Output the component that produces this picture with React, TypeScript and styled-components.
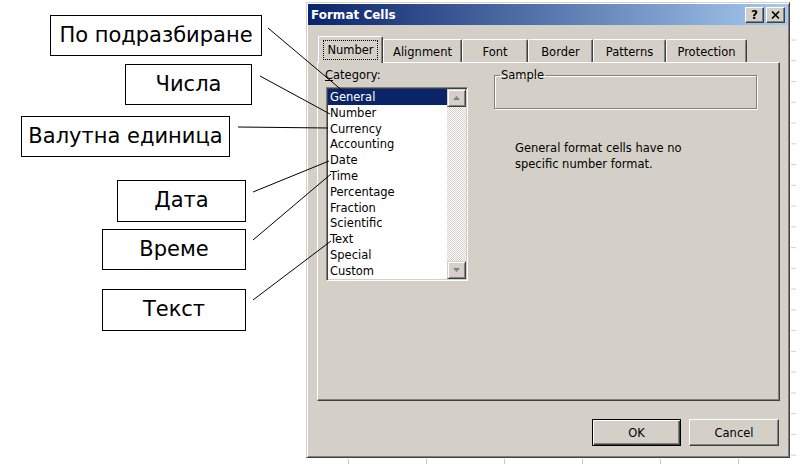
import React from 'react';
import styled, { createGlobalStyle } from 'styled-components';

const GlobalStyle = createGlobalStyle`
  html, body { margin: 0; padding: 0; background: #fff; }
  body { width: 809px; height: 469px; overflow: hidden; }
`;

const Page = styled.div`
  position: relative;
  width: 809px;
  height: 469px;
  display: flex;
  align-items: flex-start;
`;

const Notes = styled.div`
  width: 306px;
  flex: 0 0 306px;
  display: flex;
  flex-direction: column;
  align-items: flex-start;
`;

const Note = styled.div<{ $left: number; $gap: number; $width: number; $height?: number }>`
  margin-left: ${(p) => p.$left}px;
  margin-top: ${(p) => p.$gap}px;
  width: ${(p) => p.$width}px;
  height: ${(p) => p.$height ?? 41}px;
  box-sizing: border-box;
  border: 1px solid #000;
  background: #fff;
  display: flex;
  align-items: center;
  justify-content: center;
  padding-bottom: 2px;
  font-family: 'DejaVu Sans', sans-serif;
  font-size: 21px;
  color: #000;
  white-space: nowrap;
`;

const Dialog = styled.div`
  margin-top: 2px;
  width: 484px;
  height: 456px;
  box-sizing: border-box;
  background: #d4d0c8;
  border: 1px solid;
  border-color: #d4d0c8 #404040 #404040 #d4d0c8;
  box-shadow: inset 1px 1px #fff, inset -1px -1px #808080;
  padding: 1px;
  display: flex;
  flex-direction: column;
  font-family: 'DejaVu Sans', 'Liberation Sans', sans-serif;
  font-size: 11.5px;
  color: #000;
`;

const TitleBar = styled.div`
  height: 21px;
  flex: 0 0 21px;
  display: flex;
  align-items: center;
  padding: 0 3px 0 3px;
  background: linear-gradient(to right, #0a246a, #a6caf0);
`;

const Title = styled.div`
  flex: 1;
  color: #fff;
  font-weight: bold;
  font-size: 12px;
`;

const CaptionButton = styled.div<{ $gap?: number }>`
  width: 19px;
  height: 16px;
  margin-left: ${(p) => p.$gap ?? 0}px;
  box-sizing: border-box;
  background: #d4d0c8;
  border: 1px solid;
  border-color: #fff #404040 #404040 #fff;
  box-shadow: inset -1px -1px #808080;
  display: flex;
  align-items: center;
  justify-content: center;
  font-weight: bold;
  font-size: 12px;
  line-height: 1;
`;

const Body = styled.div`
  flex: 1;
  display: flex;
  flex-direction: column;
  padding: 11px 8px 0 9px;
`;

const TabStrip = styled.div`
  height: 26px;
  display: flex;
  align-items: flex-end;
  padding-left: 1px;
  position: relative;
  z-index: 1;
`;

const Tab = styled.div<{ $width: number; $active?: boolean }>`
  width: ${(p) => p.$width}px;
  height: ${(p) => (p.$active ? 27 : 23)}px;
  margin-bottom: ${(p) => (p.$active ? -1 : 0)}px;
  box-sizing: border-box;
  background: #d4d0c8;
  border-top: 1px solid #fff;
  border-left: 1px solid #fff;
  border-right: 1px solid #404040;
  border-radius: 2px 2px 0 0;
  box-shadow: inset -1px 0 #808080;
  display: flex;
  align-items: center;
  justify-content: center;
  padding-top: 1px;
  padding-bottom: ${(p) => (p.$active ? 2 : 0)}px;
`;

const Focus = styled.span`
  outline: 1px dotted #000;
  outline-offset: 2px;
  padding: 0 1px;
`;

const Panel = styled.div`
  width: 463px;
  height: 339px;
  box-sizing: border-box;
  border: 1px solid;
  border-color: #fff #404040 #404040 #fff;
  box-shadow: inset -1px -1px #808080;
  display: flex;
  align-items: flex-start;
  padding: 5px 0 0 7px;
`;

const LeftCol = styled.div`
  width: 143px;
  display: flex;
  flex-direction: column;
`;

const Label = styled.div`
  line-height: 14px;
  u { text-decoration: underline; }
`;

const ListBox = styled.div`
  margin: 5px 0 0 1px;
  width: 142px;
  height: 194px;
  box-sizing: border-box;
  background: #fff;
  border: 1px solid;
  border-color: #808080 #fff #fff #808080;
  box-shadow: inset 1px 1px #404040, inset -1px -1px #d4d0c8;
  padding: 1px;
  display: flex;
`;

const Items = styled.div`
  flex: 1;
  display: flex;
  flex-direction: column;
`;

const Item = styled.div<{ $selected?: boolean }>`
  height: 15.8px;
  line-height: 16.5px;
  padding-left: 2px;
  background: ${(p) => (p.$selected ? '#0a246a' : 'transparent')};
  color: ${(p) => (p.$selected ? '#fff' : '#000')};
`;

const ScrollBar = styled.div`
  width: 19px;
  display: flex;
  flex-direction: column;
`;

const ScrollButton = styled.div`
  height: 18px;
  flex: 0 0 18px;
  box-sizing: border-box;
  background: #d4d0c8;
  border: 1px solid;
  border-color: #d4d0c8 #404040 #404040 #d4d0c8;
  box-shadow: inset 1px 1px #fff, inset -1px -1px #808080;
  display: flex;
  align-items: center;
  justify-content: center;
`;

const Track = styled.div`
  flex: 1;
  background: repeating-conic-gradient(#fff 0 25%, #d4d0c8 0 50%) 0 0 / 2px 2px;
`;

const RightCol = styled.div`
  margin-left: 26px;
  display: flex;
  flex-direction: column;
`;

const Group = styled.fieldset`
  margin: 0;
  padding: 0;
  width: 263px;
  height: 41px;
  box-sizing: border-box;
  border: 1px solid #808080;
  box-shadow: inset 1px 1px #fff, 1px 1px #fff;
  min-inline-size: 0;
`;

const Legend = styled.legend`
  padding: 0 1px;
  margin-left: 5px;
  line-height: 14px;
`;

const Description = styled.div`
  margin: 31px 0 0 21px;
  line-height: 16px;
`;

const ButtonRow = styled.div`
  display: flex;
  justify-content: flex-end;
  gap: 8px;
  margin: 18px 1px 0 0;
`;

const Button = styled.div<{ $width: number; $default?: boolean }>`
  width: ${(p) => p.$width}px;
  height: 27px;
  box-sizing: border-box;
  background: #d4d0c8;
  border: 1px solid;
  border-color: ${(p) => (p.$default ? '#000' : '#fff #404040 #404040 #fff')};
  box-shadow: ${(p) =>
    p.$default
      ? 'inset 1px 1px #fff, inset -1px -1px #404040, inset -2px -2px #808080'
      : 'inset -1px -1px #808080'};
  display: flex;
  align-items: center;
  justify-content: center;
`;

const Overlay = styled.svg`
  position: absolute;
  left: 0;
  top: 0;
  pointer-events: none;
`;

const notes = [
  { text: 'По подразбиране', left: 50, gap: 15, width: 212 },
  { text: 'Числа', left: 125, gap: 8, width: 127 },
  { text: 'Валутна единица', left: 21, gap: 11, width: 209 },
  { text: 'Дата', left: 117, gap: 23, width: 129, height: 42 },
  { text: 'Време', left: 102, gap: 7, width: 144 },
  { text: 'Текст', left: 102, gap: 19, width: 144, height: 42 },
];

const tabs = [
  { name: 'Number', width: 65 },
  { name: 'Alignment', width: 79 },
  { name: 'Font', width: 66 },
  { name: 'Border', width: 65 },
  { name: 'Patterns', width: 73 },
  { name: 'Protection', width: 81 },
];

const categories = [
  'General', 'Number', 'Currency', 'Accounting', 'Date', 'Time',
  'Percentage', 'Fraction', 'Scientific', 'Text', 'Special', 'Custom',
];

const leaders = [
  [268, 28, 344, 92],
  [260, 76, 330, 114],
  [238, 127, 328, 128],
  [253, 192, 329, 161],
  [253, 240, 331, 174],
  [253, 300, 331, 241],
];

const Arrow = ({ up }: { up?: boolean }) => (
  <svg width="9" height="6" viewBox="0 0 9 6">
    <polygon points={up ? '1,5 8,5 4.5,1' : '1,1 8,1 4.5,5'} fill="#808080" />
  </svg>
);

export default function App() {
  const sideTicks = Array.from({ length: 22 }, (_, i) => 40 + i * 20.76);
  return (
    <Page>
      <GlobalStyle />
      <Notes>
        {notes.map((n) => (
          <Note key={n.text} $left={n.left} $gap={n.gap} $width={n.width} $height={n.height}>
            {n.text}
          </Note>
        ))}
      </Notes>
      <Dialog>
        <TitleBar>
          <Title>Format Cells</Title>
          <CaptionButton>?</CaptionButton>
          <CaptionButton $gap={2}>
            <svg width="9" height="8" viewBox="0 0 9 8">
              <path d="M1 0.5 L8 7.5 M8 0.5 L1 7.5" stroke="#000" strokeWidth="1.6" />
            </svg>
          </CaptionButton>
        </TitleBar>
        <Body>
          <TabStrip>
            {tabs.map((t, i) => (
              <Tab key={t.name} $width={t.width} $active={i === 0}>
                {i === 0 ? <Focus>{t.name}</Focus> : t.name}
              </Tab>
            ))}
          </TabStrip>
          <Panel>
            <LeftCol>
              <Label>
                <u>C</u>ategory:
              </Label>
              <ListBox>
                <Items>
                  {categories.map((c, i) => (
                    <Item key={c} $selected={i === 0}>
                      {c}
                    </Item>
                  ))}
                </Items>
                <ScrollBar>
                  <ScrollButton>
                    <Arrow up />
                  </ScrollButton>
                  <Track />
                  <ScrollButton>
                    <Arrow />
                  </ScrollButton>
                </ScrollBar>
              </ListBox>
            </LeftCol>
            <RightCol>
              <Group>
                <Legend>Sample</Legend>
              </Group>
              <Description>
                General format cells have no
                <br />
                specific number format.
              </Description>
            </RightCol>
          </Panel>
          <ButtonRow>
            <Button $width={89} $default>
              OK
            </Button>
            <Button $width={90}>Cancel</Button>
          </ButtonRow>
        </Body>
      </Dialog>
      <Overlay width="809" height="469" viewBox="0 0 809 469">
        {leaders.map(([x1, y1, x2, y2], i) => (
          <line key={i} x1={x1} y1={y1} x2={x2} y2={y2} stroke="#000" strokeWidth="1" />
        ))}
        {[348, 426, 504, 582, 660, 738].map((x) => (
          <line key={x} x1={x + 0.5} y1={459} x2={x + 0.5} y2={464} stroke="#c8c8c8" />
        ))}
        {sideTicks.map((y) => (
          <line key={y} x1={791} y1={y} x2={796} y2={y} stroke="#d0d0d0" />
        ))}
      </Overlay>
    </Page>
  );
}
